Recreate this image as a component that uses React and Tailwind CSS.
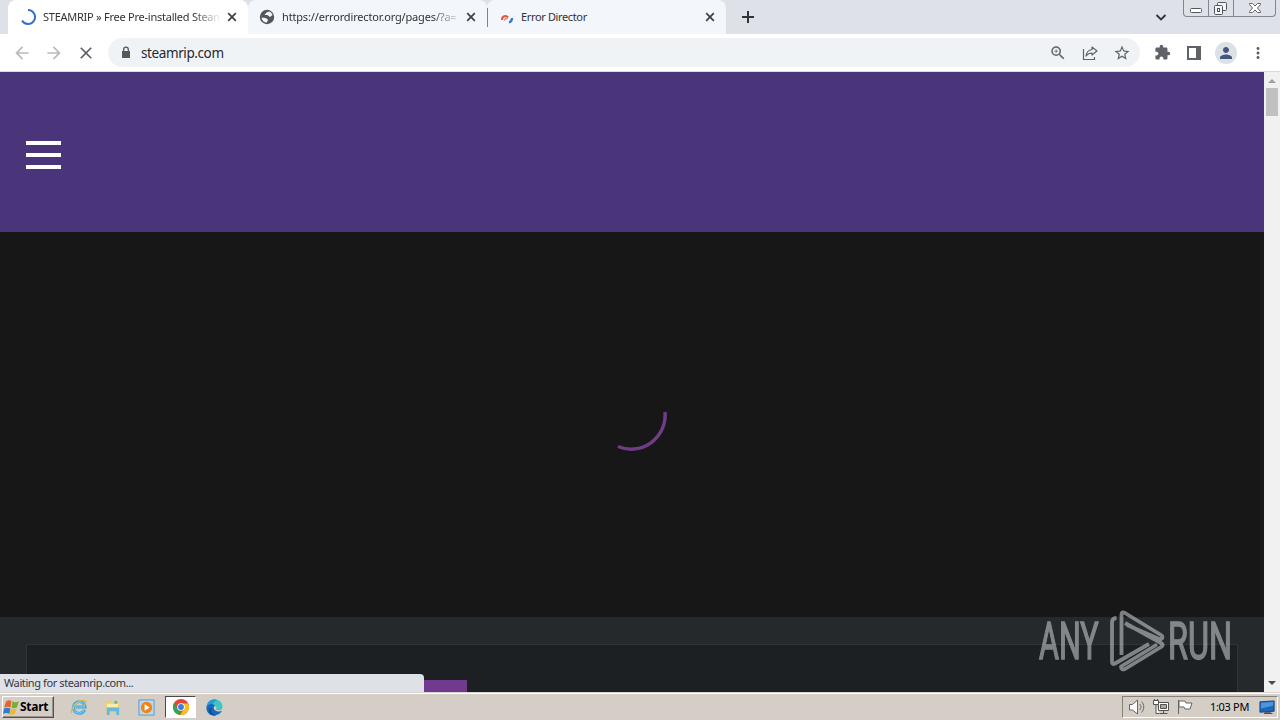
import React from "react";
import {
  MdZoomIn, MdStarBorder, MdExtension, MdArrowBack,
  MdArrowForward, MdClose, MdMoreVert, MdPerson,
} from "react-icons/md";

function Tab({ icon, title, className, titleClass }) {
  return (
    <div className={`flex h-[34px] shrink-0 items-center pr-2 ${className}`}>
      <div className="flex w-4 shrink-0 justify-center">{icon}</div>
      <div className={`ml-[7px] w-[176px] shrink-0 whitespace-nowrap text-[11px] leading-[16px] text-[#303236] ${titleClass}`}>
        {title}
      </div>
      <svg viewBox="0 0 14 14" className="ml-1.5 size-[14px] shrink-0" stroke="#3c3f44" strokeWidth="1.700">
        <path d="M3.200 3.200l7.600 7.600m0-7.600l-7.600 7.600" />
      </svg>
    </div>
  );
}

function ToolButton({ children }) {
  return <div className="flex w-8 shrink-0 items-center justify-center text-[#5f6368]">{children}</div>;
}

function TabStrip() {
  const fade = "[mask-image:linear-gradient(to_right,#000_150px,transparent_178px)]";
  return (
    <div className="flex h-[34px] bg-[#dee1e8] pl-2">
      <Tab
        className="w-[240px] rounded-t-lg bg-white pl-3"
        titleClass={`tracking-[-0.25px] ${fade}`}
        title="STEAMRIP » Free Pre-installed Steam"
        icon={
          <svg viewBox="0 0 16 16" className="size-4" fill="none" stroke="#3571c6" strokeWidth="2">
            <path d="M8 1a7 7 0 1 1-6 10.6" />
          </svg>
        }
      />
      <Tab
        className="w-[239px] rounded-t-lg bg-[#f3f6fa] pl-[11px]"
        titleClass={`tracking-[-0.16px] ${fade}`}
        title="https://errordirector.org/pages/?a="
        icon={
          <svg viewBox="0 0 16 16" className="size-4">
            <circle cx="8" cy="8" r="7.200" fill="#53575c" />
            <path d="M2.500 8.500l4 .5 2.500 1.500-1 3C5 13.500 2.800 11.500 2.500 8.500zM7.500 3.500l3-1c1.500.8 2.500 2 3 3.500L11 8 8.500 6 5.500 6z" fill="#f3f6fa" />
          </svg>
        }
      />
      <div className="flex w-[239px] items-center rounded-t-lg bg-[#f3f6fa]">
        <div className="h-[19px] w-px bg-[#7f8389]" />
        <Tab
          className="w-[238px] pl-[10px]"
          titleClass="tracking-[-0.36px]"
          title="Error Director"
          icon={
            <svg viewBox="0 0 16 16" className="size-4" fill="none">
              <path d="M4 11c0-4 4-5 6-2.500" stroke="#df5949" strokeWidth="2.200" />
              <path d="M6.500 11.500c0-1.500 1.500-2.500 3-1.500" stroke="#e78a71" strokeWidth="1.500" />
              <path d="M14 9c0 2-1 4-3 4.500" stroke="#3478c6" strokeWidth="2.200" />
            </svg>
          }
        />
      </div>
      <div className="flex w-[44px] items-center justify-center">
        <svg viewBox="0 0 14 14" className="size-[14px]" stroke="#303338" strokeWidth="2">
          <path d="M7 1v12M1 7h12" />
        </svg>
      </div>
      <div className="flex flex-1 items-center justify-end pr-4">
        <svg viewBox="0 0 12 12" className="size-3" fill="none" stroke="#303338" strokeWidth="1.900">
          <path d="M1.500 4L6 8.500 10.500 4" />
        </svg>
      </div>
      <div className="mr-1 flex h-[17px] w-[93px] rounded-b border border-t-0 border-[#83868c] text-[#53565d]">
        <div className="flex w-[25px] justify-center border-r border-[#83868c]">
          <svg viewBox="0 0 24 16" className="h-4 w-6" fill="#fff" stroke="currentColor">
            <rect x="6.500" y="8.500" width="11" height="4" rx="1" />
          </svg>
        </div>
        <div className="flex w-[25px] justify-center border-r border-[#83868c]">
          <svg viewBox="0 0 24 16" className="h-4 w-6" fill="#f4f5f8" stroke="currentColor">
            <rect x="8.500" y="2.500" width="9" height="8" rx="1" />
            <rect x="5.500" y="5.500" width="8" height="9" rx="1" />
            <rect x="8.500" y="8.500" width="2" height="3" />
          </svg>
        </div>
        <div className="flex flex-1 justify-center">
          <svg viewBox="0 0 24 16" className="h-4 w-6" fill="#fff" stroke="currentColor" strokeWidth="0.900">
            <path d="M6.500 3.500h3l2.500 2.500 2.500-2.500h3v1l-3 3.500 3 3.500v1h-3L12 10l-2.500 2.500h-3v-1l3-3.500-3-3.500z" />
          </svg>
        </div>
      </div>
    </div>
  );
}

function Toolbar() {
  return (
    <div className="flex h-[38px] items-center border-b border-[#d8d9e8] bg-white px-1.5">
      <div className="flex">
        <ToolButton><MdArrowBack className="size-5 text-[#b9bbbe]" /></ToolButton>
        <ToolButton><MdArrowForward className="size-5 text-[#b9bbbe]" /></ToolButton>
        <ToolButton><MdClose className="size-5" /></ToolButton>
      </div>
      <div className="mx-1.5 flex h-[29px] flex-1 items-center rounded-full bg-[#f0f3f6] pl-[11px] pr-0.5">
        <svg viewBox="0 0 14 14" className="size-[14px]">
          <path d="M3 5h8v7H3z" fill="#55585d" />
          <path d="M4.700 5.500V3.500a2.300 2.300 0 0 1 4.600 0v2" fill="none" stroke="#55585d" strokeWidth="1.300" />
        </svg>
        <span className="ml-2 flex-1 text-[13.500px] leading-5 tracking-[-0.4px] text-[#25272b]">steamrip.com</span>
        <ToolButton><MdZoomIn className="size-[18px]" /></ToolButton>
        <ToolButton>
          <svg viewBox="0 0 18 18" className="size-[18px]" fill="none" stroke="currentColor" strokeWidth="1.200">
            <path d="M2.500 5v10.500h11V13" />
            <path d="M11 3l5 4-5 4V9c-3 0-4.500 1-6 3 .5-4 2.500-6 6-6.500z" strokeLinejoin="round" />
          </svg>
        </ToolButton>
        <ToolButton><MdStarBorder className="size-[18px]" /></ToolButton>
      </div>
      <ToolButton><MdExtension className="size-[17px]" /></ToolButton>
      <ToolButton>
        <svg viewBox="0 0 14 14" className="size-[14px]">
          <path d="M1 1h12v12H1z" fill="#fff" stroke="currentColor" strokeWidth="2" />
          <path d="M9 1h4v12H9z" fill="currentColor" />
        </svg>
      </ToolButton>
      <ToolButton>
        <div className="flex size-[22px] items-center justify-center rounded-full bg-[#dce1e7]">
          <MdPerson className="size-[18px] text-[#46557a]" />
        </div>
      </ToolButton>
      <ToolButton><MdMoreVert className="size-[18px]" /></ToolButton>
    </div>
  );
}

function Scrollbar() {
  return (
    <div className="flex w-4 flex-col items-center justify-between bg-[#f1f1f1]">
      <div className="flex flex-col items-center">
        <svg viewBox="0 0 16 16" className="size-4"><path d="M4 11l4-4 4 4z" fill="#a0a0a0" /></svg>
        <div className="h-7 w-3 bg-[#c1c1c1]" />
      </div>
      <svg viewBox="0 0 16 16" className="size-4"><path d="M4 5h8l-4 4z" fill="#4b4b4b" /></svg>
    </div>
  );
}

function Watermark() {
  return (
    <svg viewBox="0 0 208 76" className="absolute left-[1036px] top-[536px] h-[76px] w-[208px]" fill="none">
      <g opacity="0.550">
        <g fill="#d2d4d8" stroke="#d2d4d8" strokeWidth="1.500" fontFamily="Roboto, sans-serif" fontSize="51">
          <text transform="translate(3 50.500) scale(0.600 1)">ANY</text>
          <text transform="translate(132 50.500) scale(0.635 1)">RUN</text>
        </g>
        <path
          d="M80.500 10q-4.500 0-4.500 5v39q0 3 3 1.500L113 36M85.500 47V7q0-4 3.500-2l36 22q3 2.500 0 4l-3-.5L91 17M89 15l36 20q3.500 2 0 4L89 61q-4 1.500-4-2.500l36-22"
          stroke="#d2d4d8"
          strokeWidth="3.800"
          strokeLinejoin="round"
        />
      </g>
    </svg>
  );
}

function Page() {
  return (
    <div className="relative flex h-[620px] overflow-hidden">
      <div className="flex flex-1 flex-col">
        <div className="flex h-[160px] items-center bg-[#4a357b] pl-[26px] pt-[6px]">
          <div className="flex flex-col gap-2">
            <div className="h-1 w-[35px] bg-white" />
            <div className="h-1 w-[35px] bg-white" />
            <div className="h-1 w-[35px] bg-white" />
          </div>
        </div>
        <div className="flex h-[385px] justify-center bg-[#171717]">
          <svg viewBox="0 0 72 72" className="mt-[149px] size-[72px]" fill="none">
            <path d="M69 31A34 34 0 0 1 22 65.500" stroke="#6f3c87" strokeWidth="3.500" />
          </svg>
        </div>
        <div className="flex-1 bg-[#26292c] px-[26px] pt-[27px]">
          <div className="h-full border border-b-0 border-[#303338] bg-[#1d2022] pl-[397px] pt-[35px]">
            <div className="h-3 w-[43px] bg-[#723a8f]" />
          </div>
        </div>
      </div>
      <Scrollbar />
      <Watermark />
      <div className="absolute bottom-0 left-0 h-[18px] w-[424px] rounded-tr bg-[#dee1e8] pl-1 text-[11px] leading-[18px] text-[#34373d]">
        <span className="tracking-[-0.4px]">Waiting for steamrip.com...</span>
      </div>
    </div>
  );
}

function QuickLaunch() {
  return (
    <>
      <svg viewBox="0 0 18 18" className="ml-[16px] size-[17px]" fill="none">
        <path d="M15.500 11.500A6.200 6.200 0 1 1 16 8.500H6" stroke="#3aa6dc" strokeWidth="3" />
        <path d="M15 11.500A6 6 0 1 1 15.500 8.500H6" stroke="#91d7f2" strokeWidth="1" />
        <path d="M2 15C-1 10 11-1 16 2c2 1 0 3-1 4" stroke="#e1b843" strokeWidth="1.300" />
      </svg>
      <svg viewBox="0 0 18 18" className="ml-[17px] size-[17px]">
        <path d="M1 3l5-1 2 2h8v10H1z" fill="#edcf70" />
        <path d="M3 5h12v4H3z" fill="#f9ecad" />
        <path d="M3 9h13v8h-3v-4H6v4H3z" fill="#66b9d8" />
        <path d="M11 2h3v3h-3z" fill="#71b96a" />
      </svg>
      <svg viewBox="0 0 18 18" className="ml-[17px] size-[17px]">
        <path d="M1 1h16v16H1z" fill="#b8d9ef" stroke="#5997cb" />
        <circle cx="9" cy="9" r="6" fill="#ef8419" />
        <path d="M7 5.500L12.500 9 7 12.500z" fill="#fff" />
      </svg>
      <div className="ml-[10px] flex h-[22px] w-[31px] items-center justify-center border border-b-white border-l-[#4b4945] border-r-white border-t-[#4b4945] bg-white">
        <svg viewBox="0 0 18 18" className="size-4">
          <circle cx="9" cy="9" r="9" fill="#e74436" />
          <path d="M1.200 4.500L5.500 12 9 13.500 8 18A9 9 0 0 1 1.200 4.500z" fill="#32a653" />
          <path d="M9 5h8a9 9 0 0 1-9 13l4.500-7z" fill="#f9bf1b" />
          <circle cx="9" cy="9" r="4.300" fill="#fff" />
          <circle cx="9" cy="9" r="3.300" fill="#397fe6" />
        </svg>
      </div>
      <svg viewBox="0 0 18 18" className="ml-[10px] size-[17px]">
        <path d="M.5 9C1-2 17-2 17.500 8c.3 4-4 5-7 3 2-3-2-6-10-2z" fill="#3fc5c2" />
        <path d="M.5 9C1 2 7-1 12 1c-3 1-5 4-6 7z" fill="#279bd8" />
        <path d="M.5 9C2 5 7 4 9.500 7c-2 1-2 5 2 6 2 .7 4 0 5.500-.500C13 20 0 19 .5 9z" fill="#1768b8" />
        <path d="M6 9c-1.500 4 1 8 5 8.500C3 19 .5 11 6 9z" fill="#124d99" />
      </svg>
    </>
  );
}

function Tray() {
  return (
    <div className="ml-auto mr-[2px] flex h-[22px] w-[156px] items-center border border-b-white border-l-[#85817b] border-r-white border-t-[#85817b] pl-[5px]">
      <svg viewBox="0 0 18 18" className="size-[18px]" fill="#fff" stroke="#67655f">
        <path d="M1.500 6.500h3L9.500 2v14l-5-4h-3z" />
        <path d="M11.500 6c2 2 2 4 0 6M13.500 3.500c3 3 3 8 0 11" fill="none" />
      </svg>
      <svg viewBox="0 0 18 18" className="ml-[6px] size-[18px]" fill="#fff" stroke="#55534f">
        <path d="M6.500 4.500h10v8h-10z" />
        <path d="M8.500 6.500h6v4h-6z" fill="#aaa" />
        <path d="M11.500 12.500v3m-4 0h8" />
        <path d="M1.500 2.500h5v4h-5zM2.500 1v2m3-2v2M4 6.500v9h3" />
      </svg>
      <svg viewBox="0 0 18 18" className="ml-[6px] size-[18px]" fill="#fff" stroke="#67655f">
        <path d="M2.500 2v14" />
        <path d="M3 3h6l1 2h6l-2 6H9l-1-2H3z" />
      </svg>
      <span className="ml-4 whitespace-nowrap text-[11px] tracking-[-0.32px] text-black">1:03 PM</span>
      <svg viewBox="0 0 18 18" className="ml-auto mr-px size-[17px]">
        <path d="M1 3l15-1v11l-15 1z" fill="#1e66ba" stroke="#174379" />
        <path d="M2 4l13-1v4L2 10z" fill="#4b95dc" />
        <path d="M6 14h6l3 2H5z" fill="#444d57" />
      </svg>
    </div>
  );
}

function Taskbar() {
  return (
    <div className="flex h-7 items-center border-t border-[#d8d4ce] bg-[#d5cec7] pl-0.5 pt-px shadow-[inset_0_1px_0_#fff]">
      <div className="flex h-[22px] w-[52px] shrink-0 items-center border border-b-[#55534f] border-l-white border-r-[#55534f] border-t-white shadow-[inset_-1px_-1px_0_#99948d]">
        <svg viewBox="0 0 16 16" className="size-[17px] shrink-0">
          <path d="M3 2q3-1.500 5 0L7 8q-3-1.500-6 0z" fill="#e56532" />
          <path d="M9 2q3 2 6 0l-2 6q-3 1.500-5 0z" fill="#76af36" />
          <path d="M1 9q3-1.500 6 0l-1 5q-3-1.500-6 0z" fill="#347cc8" />
          <path d="M8 9q2 1.500 5 0l-2 5q-3 1.500-5 0z" fill="#efb928" />
        </svg>
        <span className="text-[12px] font-bold tracking-[-0.25px] text-black">Start</span>
      </div>
      <QuickLaunch />
      <Tray />
    </div>
  );
}

export default function App() {
  return (
    <div className="h-[720px] w-[1280px] overflow-hidden font-['Noto_Sans','Open_Sans',sans-serif]">
      <TabStrip />
      <Toolbar />
      <Page />
      <Taskbar />
    </div>
  );
}
